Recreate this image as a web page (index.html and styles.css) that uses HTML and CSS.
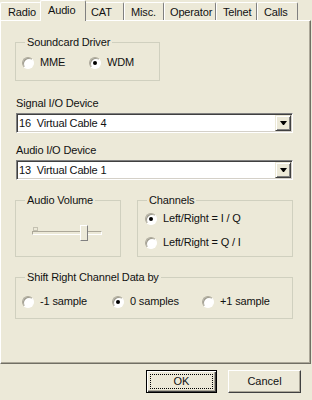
FILE: index.html
```html
<!DOCTYPE html>
<html>
<head>
  <meta charset="UTF-8">
  <title>Audio</title>
  <link rel="stylesheet" href="styles.css">
</head>
<body>
  <div class="tabs">
    <div class="tab">Radio</div>
    <div class="tab active">Audio</div>
    <div class="tab">CAT</div>
    <div class="tab">Misc.</div>
    <div class="tab">Operator</div>
    <div class="tab">Telnet</div>
    <div class="tab">Calls</div>
  </div>

  <div class="panel">
    <fieldset class="group driver">
      <legend>Soundcard Driver</legend>
      <div class="opts">
        <label class="radio"><i></i>MME</label>
        <label class="radio on"><i></i>WDM</label>
      </div>
    </fieldset>

    <div class="caption first">Signal I/O Device</div>
    <div class="combo"><span class="value">16&nbsp; Virtual Cable 4</span><span class="drop"></span></div>

    <div class="caption">Audio I/O Device</div>
    <div class="combo"><span class="value">13&nbsp; Virtual Cable 1</span><span class="drop"></span></div>

    <div class="pair">
      <fieldset class="group volume">
        <legend>Audio Volume</legend>
        <div class="slider">
          <span class="tick"></span>
          <span class="track"></span>
          <span class="thumb"></span>
        </div>
      </fieldset>
      <fieldset class="group channels">
        <legend>Channels</legend>
        <div class="opts col">
          <label class="radio on"><i></i>Left/Right = I / Q</label>
          <label class="radio"><i></i>Left/Right = Q / I</label>
        </div>
      </fieldset>
    </div>

    <fieldset class="group shift">
      <legend>Shift Right Channel Data by</legend>
      <div class="opts">
        <label class="radio"><i></i>-1 sample</label>
        <label class="radio on"><i></i>0 samples</label>
        <label class="radio"><i></i>+1 sample</label>
      </div>
    </fieldset>
  </div>

  <div class="buttons">
    <button class="btn default">OK</button>
    <button class="btn cancel">Cancel</button>
  </div>
</body>
</html>
```
FILE: styles.css
```css
* {box-sizing: border-box}
html,body {height: 100%}
body {margin: 0;background: #ECE9D8;color: #111;font: 11px/13px "Liberation Sans",Arial,sans-serif;letter-spacing: -0.15px}

/* tab strip */
.tabs {display: flex;align-items: flex-start;height: 20px}
.tab {height: 18px;margin-top: 2px;padding: 3px 0 0 6px;border: 1px solid #fff;border-bottom: 0;border-right-color: #808080;border-radius: 2px 2px 0 0;background: #ECE9D8;white-space: nowrap;overflow: hidden}
.tab:nth-child(1) {width: 42px;padding-left: 7px}
.tab:nth-child(3) {width: 40px}
.tab:nth-child(4) {width: 40px}
.tab:nth-child(5) {width: 52px;padding-left: 5px}
.tab:nth-child(6) {width: 41px}
.tab:nth-child(7) {width: 41px}
.tab.active {width: 46px;height: 21px;margin: 0 -2px;padding: 3px 0 0 7px;position: relative;z-index: 1}

/* page */
.panel {width: 311px;padding: 15px 0 44px 14px;border: 1px solid #fff;border-right-color: #716F64;border-bottom-color: #716F64;box-shadow: inset -1px -1px #ACA899}

.group {margin: 0;padding: 0;min-width: 0;border: 1px solid #D0D0BF}
.group legend {margin-left: 9px;padding: 0 2px;line-height: 13px}
.driver {width: 145px}
.driver .opts {padding: 7px 0 11px 6px}
.driver .radio {width: 67px}

.opts {display: flex}
.opts.col {flex-direction: column;gap: 11px;padding: 5px 0 7px 7px}
.radio {display: flex;align-items: center;gap: 6px;height: 13px}
.radio i {width: 12px;height: 12px;flex: none;border-radius: 50%;background: #fff;border: 1px solid;border-color: #ACA899 #fff #fff #ACA899;box-shadow: inset 1px 1px #9d9a8c;display: flex;align-items: center;justify-content: center}
.radio.on i::after {content: "";width: 4px;height: 4px;border-radius: 50%;background: #000}

.caption {margin: 11px 0 0 1px}
.caption.first {margin-top: 16px}
.combo {display: flex;align-items: center;width: 277px;height: 20px;margin: 3px 0 0 1px;padding: 1px;background: #fff;border: 1px solid;border-color: #808080 #fff #fff #808080;box-shadow: inset 1px 1px #404040, inset -1px -1px #D4D0C8}
.combo .value {flex: 1;padding-left: 1px}
.drop {width: 16px;height: 16px;display: flex;align-items: center;justify-content: center;background: #ECE9D8;border: 1px solid;border-color: #ECE9D8 #404040 #404040 #ECE9D8;box-shadow: inset 1px 1px #fff, inset -1px -1px #808080}
.drop::before {content: "";width: 1px;height: 0;border-top: 4px solid #000;border-left: 3px solid transparent;border-right: 3px solid transparent}

.pair {display: flex;gap: 16px;margin-top: 14px;width: 278px}
.volume {width: 106px}
.channels {flex: 1}

.slider {position: relative;width: 70px;height: 16px;margin: 18px 0 0 16px}
.track {position: absolute;left: 0;right: 0;top: 6px;height: 4px;border: 1px solid;border-color: #ACA899 #fff #fff #ACA899}
.tick {position: absolute;left: 1px;top: 2px;width: 5px;height: 4px;border: 1px solid #C4C1B1}
.thumb {position: absolute;left: 48px;top: 0;width: 8px;height: 16px;background: #ECE9D8;border: 1px solid;border-color: #fff #808080 #808080 #fff}

.shift {width: 278px;margin-top: 14px}
.shift .opts {padding: 11px 0 10px 6px}
.shift .radio {width: 90px}

/* dialog buttons */
.buttons {display: flex;justify-content: flex-end;gap: 11px;padding-right: 11px;margin-top: 6px}
.btn {height: 23px;padding: 0;font: inherit;color: #111;background: #ECE9D8;border: 1px solid;border-color: #fff #404040 #404040 #fff;box-shadow: inset -1px -1px #ACA899}
.btn.default {width: 71px;border-color: #000;box-shadow: inset 1px 1px #fff, inset -1px -1px #404040, inset -2px -2px #ACA899;outline: 1px dotted #000;outline-offset: -5px}
.btn.cancel {width: 73px}
```
